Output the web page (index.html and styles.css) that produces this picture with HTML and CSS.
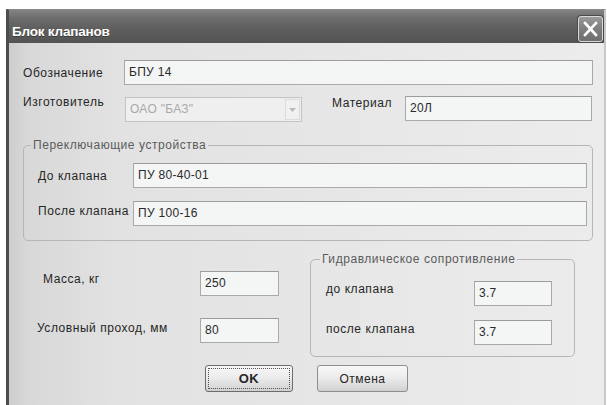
FILE: index.html
```html
<!DOCTYPE html>
<html lang="ru">
<head>
<meta charset="utf-8">
<title>Блок клапанов</title>
<link rel="stylesheet" href="styles.css">
</head>
<body>
<div class="window">
  <div class="titlebar">
    <span class="title">Блок клапанов</span>
    <span class="close">
      <svg width="23" height="24" viewBox="0 0 23 24"><path d="M6 6 L17 18 M17 6 L6 18" stroke="#fff" stroke-width="2.6" stroke-linecap="square"/></svg>
    </span>
  </div>
  <div class="client">
    <div class="row row-code">
      <span class="lbl lbl-code">Обозначение</span>
      <div class="field field-code">БПУ 14</div>
    </div>
    <div class="row row-maker">
      <span class="lbl lbl-maker">Изготовитель</span>
      <div class="combo"><span class="combo-text">ОАО "БАЗ"</span><span class="combo-btn"><svg width="7" height="4" viewBox="0 0 7 4"><path d="M0 0 H7 L3.5 4 Z" fill="#b9b9b9"/></svg></span></div>
      <span class="lbl lbl-mat">Материал</span>
      <div class="field field-mat">20Л</div>
    </div>
    <fieldset class="group group-switch">
      <legend>Переключающие устройства</legend>
      <div class="grow-row">
        <span class="lbl lbl-sw">До клапана</span>
        <div class="field field-sw">ПУ 80-40-01</div>
      </div>
      <div class="grow-row grow-row-2">
        <span class="lbl lbl-sw lbl-sw-2">После клапана</span>
        <div class="field field-sw">ПУ 100-16</div>
      </div>
    </fieldset>
    <div class="lower">
      <div class="params">
        <div class="prow prow-mass">
          <span class="lbl lbl-mass">Масса, кг</span>
          <div class="field field-small">250</div>
        </div>
        <div class="prow prow-dn">
          <span class="lbl lbl-dn">Условный проход, мм</span>
          <div class="field field-small">80</div>
        </div>
      </div>
      <fieldset class="group group-hyd">
        <legend>Гидравлическое сопротивление</legend>
        <div class="hrow">
          <span class="lbl lbl-h1">до клапана</span>
          <div class="field field-small">3.7</div>
        </div>
        <div class="hrow hrow-2">
          <span class="lbl lbl-h2">после клапана</span>
          <div class="field field-small">3.7</div>
        </div>
      </fieldset>
    </div>
    <div class="buttons">
      <button class="btn btn-ok"><span class="focus">OK</span></button>
      <button class="btn btn-cancel">Отмена</button>
    </div>
  </div>
</div>
</body>
</html>
```

FILE: styles.css
```css
html, body {
  margin: 0;
  padding: 0;
}

body {
  width: 607px;
  height: 405px;
  overflow: hidden;
  background: #ffffff;
  font-family: "Liberation Sans", Arial, sans-serif;
  font-size: 12px;
  color: #262626;
}

/* dialog frame */
.window {
  margin: 9px 0 0 6px;
  width: 600px;
  height: 400px;
  box-sizing: border-box;
  border-left: 3px solid #4d4d4d;
  border-right: 2px solid #c9c9c9;
  border-top: 1px solid #8a8a8a;
  display: flex;
  flex-direction: column;
}

.titlebar {
  height: 33px;
  flex: none;
  display: flex;
  justify-content: space-between;
  align-items: flex-start;
  background: linear-gradient(180deg, #838383 0%, #6c6c6c 25%, #5d5d5d 60%, #535353 100%);
}

.title {
  padding: 14px 0 0 3px;
  font-size: 13.5px;
  line-height: 16px;
  font-weight: bold;
  color: #ffffff;
  text-shadow: 0 1px 0 #3c3c3c;
  letter-spacing: -0.2px;
}

.close {
  margin: 6px 1px 0 0;
  width: 25px;
  height: 26px;
  box-sizing: border-box;
  border: 1px solid #d9d9d9;
  border-radius: 3px;
  box-shadow: 0 0 0 1px #4a4a4a;
  background: linear-gradient(180deg, #9a9a9a 0%, #808080 45%, #6e6e6e 100%);
  display: flex;
  align-items: center;
  justify-content: center;
}

.close svg {
  display: block;
}

.client {
  flex: 1;
  background: linear-gradient(90deg, #cdcdcd 0px, #d8d8d8 18px, #e2e2e2 110px, #e6e6e6 300px, #ececec 100%);
}

/* labels and edit boxes */
.lbl {
  flex: none;
  line-height: 14px;
  letter-spacing: 0.55px;
  white-space: nowrap;
  color: #262626;
}

.field {
  flex: none;
  box-sizing: border-box;
  height: 25px;
  border: 1px solid #a9a9a9;
  border-top-color: #9c9c9c;
  background: #f4f5f5;
  padding: 0 4px;
  line-height: 23px;
  letter-spacing: 0.3px;
  color: #2a2a2a;
  white-space: nowrap;
}

.row {
  display: flex;
  align-items: center;
  padding-left: 14px;
}

.row-code {
  margin-top: 17px;
}

.lbl-code {
  width: 101px;
}

.field-code {
  width: 469px;
}

.row-maker {
  margin-top: 11px;
  align-items: flex-start;
}

.lbl-maker {
  width: 102px;
  margin-top: -1px;
}

.combo {
  flex: none;
  box-sizing: border-box;
  width: 177px;
  height: 25px;
  margin-top: 1px;
  border: 1px solid #c3c3c3;
  background: #efefef;
  display: flex;
  justify-content: space-between;
}

.combo-text {
  padding-left: 4px;
  line-height: 23px;
  color: #a9a9a9;
  letter-spacing: 0.3px;
}

.combo-btn {
  width: 15px;
  margin: 1px;
  box-sizing: border-box;
  border: 1px solid #dcdcdc;
  background: #f1f1f1;
  display: flex;
  align-items: center;
  justify-content: center;
}

.lbl-mat {
  width: 73px;
  margin-left: 30px;
  margin-top: 0px;
}

.field-mat {
  width: 187px;
}

/* group boxes */
.group {
  margin: 0;
  min-width: 0;
  box-sizing: border-box;
  border: 1px solid #b6b6b6;
  border-radius: 5px;
}

.group legend {
  padding: 0 2px;
  line-height: 14px;
  color: #5b5b5b;
  letter-spacing: 0.55px;
}

.group-switch {
  margin: 16px 0 0 14px;
  width: 570px;
  padding: 11px 5px 14px 14px;
}

.group-switch legend {
  margin-left: -7px;
}

.grow-row {
  display: flex;
  align-items: center;
}

.grow-row-2 {
  margin-top: 13px;
  align-items: flex-start;
}

.lbl-sw {
  width: 95px;
}

.lbl-sw-2 {
  margin-top: 3px;
}

.field-sw {
  flex: 1;
}

.lower {
  display: flex;
  align-items: flex-start;
  margin-top: 11px;
}

.params {
  width: 301px;
  flex: none;
  padding-top: 19px;
}

.prow {
  display: flex;
  align-items: flex-start;
}

.prow-mass {
  padding-left: 34px;
}

.lbl-mass {
  width: 157px;
  margin-top: 1px;
}

.prow-dn {
  padding-left: 28px;
  margin-top: 22px;
}

.lbl-dn {
  width: 163px;
  margin-top: 3px;
}

.field-small {
  width: 79px;
}

.group-hyd {
  width: 265px;
  padding: 15px 0 11px 15px;
}

.group-hyd legend {
  margin-left: -6px;
}

.hrow {
  display: flex;
  align-items: flex-start;
}

.hrow-2 {
  margin-top: 14px;
}

.lbl-h1,
.lbl-h2 {
  width: 148px;
}

.lbl-h1 {
  margin-top: 1px;
}

.lbl-h2 {
  margin-top: 2px;
}

.hrow .field-small {
  width: 78px;
}

/* push buttons */
.buttons {
  display: flex;
  margin-top: 8px;
}

.btn {
  box-sizing: border-box;
  height: 27px;
  margin: 0;
  padding: 0;
  border: 1px solid #8e8e8e;
  border-radius: 3px;
  background: linear-gradient(180deg, #f7f7f7 0%, #ececec 45%, #d9d9d9 85%, #cfcfcf 100%);
  font-family: "Liberation Sans", Arial, sans-serif;
  font-size: 12px;
  color: #262626;
  letter-spacing: 0.5px;
}

.btn-ok {
  margin-left: 196px;
  width: 88px;
  border-color: #6c6c6c;
  padding: 2px;
  display: flex;
}

.focus {
  flex: 1;
  border: 1px dotted #555555;
  display: flex;
  align-items: center;
  justify-content: center;
  font-weight: bold;
  font-size: 13px;
}

.btn-cancel {
  margin-left: 24px;
  width: 91px;
}
```
